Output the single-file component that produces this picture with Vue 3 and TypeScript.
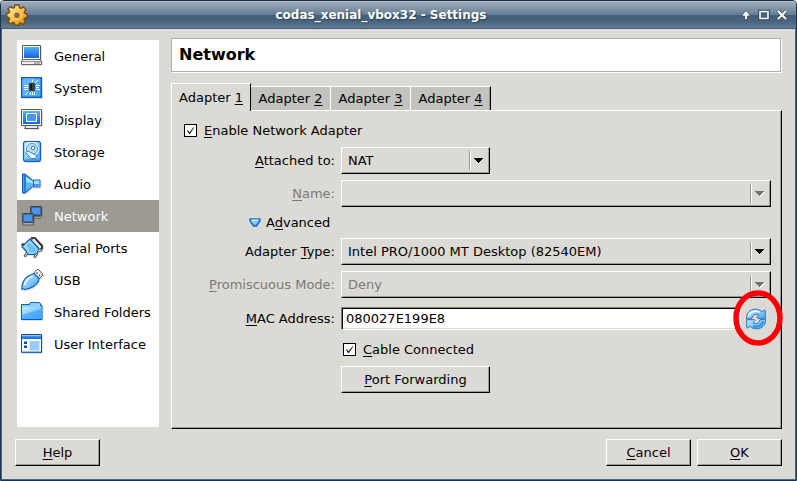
<script setup lang="ts">
import { ref } from 'vue'

interface Page {
  id: string
  label: string
}

const pages: Page[] = [
  { id: 'general', label: 'General' },
  { id: 'system', label: 'System' },
  { id: 'display', label: 'Display' },
  { id: 'storage', label: 'Storage' },
  { id: 'audio', label: 'Audio' },
  { id: 'network', label: 'Network' },
  { id: 'serial', label: 'Serial Ports' },
  { id: 'usb', label: 'USB' },
  { id: 'folders', label: 'Shared Folders' },
  { id: 'interface', label: 'User Interface' },
]

const currentPage = ref('network')
const currentTab = ref(1)
const enabled = ref(true)
const cable = ref(true)
const mac = ref('080027E199E8')

function newMac(): void {
  let tail = ''
  for (let i = 0; i < 6; i++) {
    tail += Math.floor(Math.random() * 16).toString(16).toUpperCase()
  }
  mac.value = '080027' + tail
}
</script>

<template>
  <div class="window">
    <svg class="defs" width="0" height="0" aria-hidden="true">
      <defs>
        <linearGradient id="screen" x1="0" y1="0" x2="0" y2="1">
          <stop offset="0" stop-color="#4fb0ff" />
          <stop offset="1" stop-color="#1663dc" />
        </linearGradient>
        <linearGradient id="sky" x1="0" y1="0" x2="1" y2="1">
          <stop offset="0" stop-color="#c9ecff" />
          <stop offset="1" stop-color="#43a5f8" />
        </linearGradient>
        <linearGradient id="gold" x1="0" y1="0" x2="1" y2="1">
          <stop offset="0" stop-color="#fff3bd" />
          <stop offset="0.5" stop-color="#f9c04a" />
          <stop offset="1" stop-color="#d98209" />
        </linearGradient>
      </defs>
    </svg>

    <header class="titlebar">
      <svg class="gear" viewBox="0 0 22 22" aria-hidden="true">
        <path d="M9 1h4l.7 2.800 1.300.6L17.600 3 20 5.600l-1.700 2.500.5 1.300L21.200 10v3.500l-2.600.7-.6 1.400L19.600 18 17 20.500l-2.500-1.600-1.300.6L12.500 21.200H9l-.7-2.200-1.400-.6L4.500 20 2 17.500l1.600-2.500L3 13.700.8 13V9.500L3 8.900l.6-1.400L2 5 4.500 2.600 7 4.200l1.300-.5z" fill="url(#gold)" stroke="#7b4a12" stroke-width="1.400" stroke-linejoin="round" />
        <circle cx="11" cy="11.300" r="4.300" fill="#f0ae36" stroke="#ffdf86" stroke-width="1" />
        <circle cx="11" cy="11.300" r="1.900" fill="#66727a" stroke="#9a611c" stroke-width="1.300" />
      </svg>
      <h1 class="title">codas_xenial_vbox32 - Settings</h1>
      <div class="controls">
        <button type="button" class="control" aria-label="Shade">
          <svg viewBox="0 0 12 12"><path d="M6 1.500 L10 6 V7 H7.500 V10.500 H4.500 V7 H2 V6 Z" fill="#fff" stroke="#2d4357" stroke-width="0.800" /></svg>
        </button>
        <button type="button" class="control" aria-label="Maximize">
          <svg viewBox="0 0 12 12"><path d="M2 2.500H10V9.500H2Z" fill="none" stroke="#2d4357" stroke-width="3.600" /><path d="M2 2.500H10V9.500H2Z" fill="#46627b" stroke="#fff" stroke-width="1.600" /></svg>
        </button>
        <button type="button" class="control" aria-label="Close">
          <svg viewBox="0 0 12 12"><path d="M2 2L10 10M10 2L2 10" stroke="#2d4357" stroke-width="3.600" /><path d="M2 2L10 10M10 2L2 10" stroke="#fff" stroke-width="2.200" /></svg>
        </button>
      </div>
    </header>

    <main class="content">
      <div class="columns">
        <nav class="sidebar">
          <a
            v-for="page in pages"
            :key="page.id"
            href="#"
            class="page"
            :class="{ current: page.id === currentPage }"
            @click.prevent="currentPage = page.id"
          >
            <svg class="page-icon" viewBox="0 0 22 22" aria-hidden="true">
              <template v-if="page.id === 'general'">
                <path d="M1.500.5h18v14h-18z" fill="#fff" stroke="#555" />
                <path d="M3 2h15v11H3z" fill="url(#screen)" />
                <path d="M2.500 14.500h16l2 1.500v3.500H.5V16z" fill="#eee" stroke="#666" />
                <path d="M1 16.500h19" stroke="#999" />
                <path d="M13 18h6" stroke="#777" />
              </template>
              <template v-else-if="page.id === 'system'">
                <path d="M.75.75h19.500v19.500H.75z" fill="url(#sky)" stroke="#0b5cbb" stroke-width="1.500" />
                <path d="M2 2h17v17H2z" fill="#48aaf5" opacity=".75" />
                <path d="M8 6h6v8H8z" fill="#3b3f46" />
                <path d="M9.500 7h1.500v6H9.500z" fill="#111" />
                <path d="M3 8.500h4M3 10.500h4M3 12.500h4M15 8.500h4M15 10.500h3M15 12.500h4M11.500 2.500v2.500M9.500 15v3M11.500 15v3M13.500 15v3M14 6l3-3M7 15l-3 3" stroke="#fff" stroke-width="1" />
              </template>
              <template v-else-if="page.id === 'display'">
                <path d="M.5.5h20v16H.5z" fill="#fff" stroke="#555" />
                <path d="M2 2h17v13H2z" fill="url(#screen)" />
                <path d="M5.500 4.500h10v8h-10z" fill="#409af5" stroke="#fff" stroke-width="1" />
                <path d="M4.500 16.500h12v1.500l1 1.500h-14l1-1.500z" fill="#eee" stroke="#555" />
              </template>
              <template v-else-if="page.id === 'storage'">
                <path d="M3.500.5h15l1 2v16.500l-1.500 1.500H4L2.500 19V2.500z" fill="url(#sky)" stroke="#0b62c4" stroke-width="1.200" />
                <circle cx="11" cy="8" r="6.300" fill="#b9e0fa" stroke="#fff" stroke-width="1.400" />
                <circle cx="11" cy="8" r="5.600" fill="none" stroke="#2780d1" stroke-width=".8" />
                <circle cx="12" cy="7" r="1.800" fill="#fff" stroke="#2c77bc" />
                <path d="M5 11.500l2-1.500 8.500 4.500v1.500l-1.500 1.500h-4z" fill="#fff" stroke="#176fc9" stroke-width=".9" />
                <path d="M4 19h14" stroke="#2380dc" />
              </template>
              <template v-else-if="page.id === 'audio'">
                <path d="M1.500 1v19h2.500L12.500 13V8L4 1z" fill="#1d7fe0" stroke="#0a58b4" stroke-linejoin="round" />
                <path d="M5 3.500l7 5v4.500L5 18z" fill="#5fb7fa" />
                <path d="M5 3.500l7 5v2L5 9z" fill="#a9dcff" />
                <path d="M2.500 2v17" stroke="#4aa5f2" stroke-width="1" />
                <path d="M12.500 7h6.500v7h-6.500z" fill="#a6dbff" stroke="#1867c4" />
                <path d="M13 11h5.500v2.500H13z" fill="#3e9dee" />
              </template>
              <template v-else-if="page.id === 'network'">
                <path d="M9.500 1.500h11v9h-11z" fill="#c3c3c3" stroke="#444" />
                <path d="M10.500 2.500h9v7h-9z" fill="#4a95ea" stroke="#1c5ba9" stroke-width=".8" />
                <path d="M13 11.500h6v1.500h-6z" fill="#ddd" stroke="#555" stroke-width=".8" />
                <path d="M1.500 8.500h11v9h-11z" fill="#d8d8d8" stroke="#444" />
                <path d="M2.500 9.500h9v7h-9z" fill="#4a95ea" stroke="#1c5ba9" stroke-width=".8" />
                <path d="M2 18h10l.5 1.800h-11z" fill="#eee" stroke="#555" stroke-width=".9" />
              </template>
              <template v-else-if="page.id === 'serial'">
                <path d="M10 1.500l3-1 8.500 9-1.500 3" fill="none" stroke="#333" stroke-width="2.400" />
                <path d="M12.500 2l7.500 8.500" stroke="#f3f3f3" stroke-width="1.200" />
                <path d="M1 9.500L9 2l9 9.500-2.500 6H6.500L5 14z" fill="url(#sky)" stroke="#0b5cbb" stroke-width="1.200" stroke-linejoin="round" />
                <path d="M5 8l3.500-3 8 8-2 3H8.500z" fill="#6bbdf8" stroke="#d9f3ff" stroke-width=".7" />
                <path d="M.8 8.500l2-2M3.500 19.500l2.500-3.500M13 20.500l3-4M17 14.500l4-2" fill="none" stroke="#444" stroke-width="2.400" />
                <path d="M4 19l2-3M13.500 20l2.300-3.200M17 14.300l3.300-1.600" stroke="#eee" stroke-width="1" />
              </template>
              <template v-else-if="page.id === 'usb'">
                <path d="M12 5l4-4.500h1.500L21.500 5v1.500l-4 4z" fill="#f2f2f2" stroke="#555" stroke-linejoin="round" />
                <path d="M15.500 3.500l1 1M18 6l1 1" stroke="#333" stroke-width="1.400" />
                <path d="M10.500 5.500L13 4.500 18 9.500 17.500 12 C15 17 10 19.500 4 20.500L1 19.500 1 17C2 11 6 7 10.500 5.500z" fill="url(#sky)" stroke="#0b5cbb" stroke-width="1.200" stroke-linejoin="round" />
                <path d="M3.500 16C5 11 8 8.500 11.500 7.500" fill="none" stroke="#eefaff" stroke-width="1.600" />
                <path d="M1.500 19l-1 2" stroke="#0b5cbb" />
              </template>
              <template v-else-if="page.id === 'folders'">
                <path d="M.5 18.500V3.500h8v-1L10 1.500H18l1.500 1V4.500h1.500v14z" fill="#8fd0ff" stroke="#075fbe" stroke-linejoin="round" />
                <path d="M1 6h19.500v12.500H1z" fill="url(#sky)" />
                <path d="M1 14l19.500-6v10.500H1z" fill="#35a3fa" opacity=".65" />
                <path d="M.5 18.500h20.500" stroke="#0659b5" />
              </template>
              <template v-else>
                <path d="M.5 1.500h20v18H.5z" fill="#fff" stroke="#1d4e94" />
                <path d="M1 2h19v4H1z" fill="url(#screen)" />
                <path d="M1 2.500h19" stroke="#8fcaff" />
                <path d="M3 8.500h3v2.500H3zM3 12.500h3V15H3z" fill="#124e9f" />
                <path d="M8.500 8h10v9.500h-10z" fill="#9bcaff" />
                <path d="M1 19h19" stroke="#3b7acb" />
              </template>
            </svg>
            <span>{{ page.label }}</span>
          </a>
        </nav>

        <section class="settings">
          <h2 class="heading">Network</h2>

          <div class="tabs" role="tablist">
            <button
              v-for="n in 4"
              :key="n"
              type="button"
              role="tab"
              class="tab"
              :class="{ active: n === currentTab }"
              :aria-selected="n === currentTab"
              @click="currentTab = n"
            >Adapter <u>{{ n }}</u></button>
          </div>

          <form class="pane" @submit.prevent>
            <label class="check">
              <input v-model="enabled" type="checkbox" />
              <span><u>E</u>nable Network Adapter</span>
            </label>

            <div class="fields">
              <label class="name" for="attached"><u>A</u>ttached to:</label>
              <div class="combo short">
                <select id="attached">
                  <option>NAT</option>
                </select>
                <svg class="arrow" viewBox="0 0 20 19"><path d="M.5 0v19" stroke="#9c9a94" /><path d="M1.500 0v19" stroke="#fff" /><path d="M5 7h9v1h-1v1h-1v1h-1v1h-1v1h-1v-1h-1v-1h-1V9H6V8H5z" fill="#000" /></svg>
              </div>

              <label class="name off" for="netname"><u>N</u>ame:</label>
              <div class="combo">
                <select id="netname" disabled></select>
                <svg class="arrow" viewBox="0 0 20 19"><path d="M.5 0v19" stroke="#9c9a94" /><path d="M1.500 0v19" stroke="#fff" /><path d="M6 8h9v1h-1v1h-1v1h-1v1h-1v1h-1v-1H9z" fill="#fff" /><path d="M5 7h9v1h-1v1h-1v1h-1v1h-1v1h-1v-1h-1v-1h-1V9H6V8H5z" fill="#757570" /></svg>
              </div>

              <button type="button" class="advanced">
                <svg viewBox="0 0 12 12" aria-hidden="true"><path d="M1 2H11V3.500L7.500 9H4.500L1 3.500Z" fill="url(#sky)" stroke="#0869d4" stroke-width="1.400" stroke-linejoin="round" /><path d="M2.500 3H9.500" stroke="#e8f7ff" stroke-width="1.200" /></svg>
                <span>A<u>d</u>vanced</span>
              </button>

              <label class="name" for="adapter">Adapter <u>T</u>ype:</label>
              <div class="combo">
                <select id="adapter">
                  <option>Intel PRO/1000 MT Desktop (82540EM)</option>
                </select>
                <svg class="arrow" viewBox="0 0 20 19"><path d="M.5 0v19" stroke="#9c9a94" /><path d="M1.500 0v19" stroke="#fff" /><path d="M5 7h9v1h-1v1h-1v1h-1v1h-1v1h-1v-1h-1v-1h-1V9H6V8H5z" fill="#000" /></svg>
              </div>

              <label class="name off" for="promiscuous"><u>P</u>romiscuous Mode:</label>
              <div class="combo">
                <select id="promiscuous" disabled>
                  <option>Deny</option>
                </select>
                <svg class="arrow" viewBox="0 0 20 19"><path d="M.5 0v19" stroke="#9c9a94" /><path d="M1.500 0v19" stroke="#fff" /><path d="M6 8h9v1h-1v1h-1v1h-1v1h-1v1h-1v-1H9z" fill="#fff" /><path d="M5 7h9v1h-1v1h-1v1h-1v1h-1v1h-1v-1h-1v-1h-1V9H6V8H5z" fill="#757570" /></svg>
              </div>

              <label class="name" for="mac"><u>M</u>AC Address:</label>
              <div class="mac">
                <input id="mac" v-model="mac" type="text" class="text" />
                <button type="button" class="refresh" aria-label="Generate new MAC address" @click="newMac">
                  <svg class="refresh-icon" viewBox="0 0 22 22" aria-hidden="true">
                    <path d="M1.500 11C1 5 5 1.200 10.500 1.200c2.700 0 5 .9 6.500 2.600L19.500 2 20.300 2.500v7.800H12.500L12 9.500l2-2.200C11.500 5.200 7.500 6.500 7 10.300z" fill="url(#sky)" stroke="#2a78b8" stroke-width="1" stroke-linejoin="round" />
                    <path d="M20.500 11c.5 6-3.500 9.800-9 9.800-2.700 0-5-.9-6.500-2.600L2.500 20l-.8-.5v-7.800h7.800l.5.800-2 2.200c2.500 2.100 6.500.8 7-3z" fill="url(#sky)" stroke="#2a78b8" stroke-width="1" stroke-linejoin="round" />
                    <path d="M3.300 8.500C4.500 4 9.500 1.800 14.500 4.300" fill="none" stroke="#eefaff" stroke-width="1.600" />
                    <path d="M8 18.200c4.500 1.500 9-.5 10.300-5" fill="none" stroke="#2e90e0" stroke-width="2" />
                  </svg>
                  <svg class="ring" viewBox="0 0 50 56" aria-hidden="true">
                    <ellipse cx="25" cy="28" rx="22" ry="25" fill="none" stroke="#fb0007" stroke-width="5.500" />
                  </svg>
                </button>
              </div>

              <label class="check cable">
                <input v-model="cable" type="checkbox" />
                <span><u>C</u>able Connected</span>
              </label>

              <button type="button" class="push forward"><span><u>P</u>ort Forwarding</span></button>
            </div>
          </form>
        </section>
      </div>

      <footer class="actions">
        <button type="button" class="push help"><span><u>H</u>elp</span></button>
        <button type="button" class="push"><span><u>C</u>ancel</span></button>
        <button type="button" class="push"><span><u>O</u>K</span></button>
      </footer>
    </main>
  </div>
</template>

<style>
body {
  background: #fff;
}
</style>

<style scoped>
* {
  box-sizing: border-box;
}

.window {
  display: flex;
  flex-direction: column;
  min-height: 100vh;
  border: 1px solid #1f3347;
  border-radius: 4px 4px 0 0;
  background: #dcdad5;
  color: #000;
  font: 13px/17px "DejaVu Sans", sans-serif;
  overflow: hidden;
}

.defs {
  position: absolute;
}

button,
input,
select {
  margin: 0;
  font: inherit;
  color: inherit;
}

button {
  padding: 0;
  border: 0;
  background: none;
}

u {
  text-decoration: underline 1px;
  text-underline-offset: 2px;
  text-decoration-skip-ink: none;
}

.titlebar {
  display: grid;
  grid-template-columns: 22px 1fr 54px;
  align-items: center;
  height: 28px;
  padding: 0 8px 0 5px;
  border-top: 1px solid #b4c0cb;
  border-bottom: 1px solid #3e5f80;
  background: linear-gradient(#9eacba 0%, #647f96 48%, #446079 52%, #49657e 75%, #607c94 100%);
}

.gear {
  width: 22px;
  height: 22px;
}

.title {
  margin: 0;
  color: #fff;
  font-size: 12px;
  line-height: 16px;
  font-weight: bold;
  text-align: center;
  text-shadow: 1px 1px 1px #2d4357;
}

.controls {
  display: flex;
  justify-content: flex-end;
  gap: 6px;
}

.control,
.control svg {
  display: block;
  width: 12px;
  height: 12px;
}

.content {
  display: flex;
  flex: 1;
  flex-direction: column;
  gap: 10px;
  padding: 9px 13px 13px;
  border: solid #46688a;
  border-width: 0 1px 1px;
}

.columns {
  display: flex;
  flex: 1;
  gap: 10px;
}

.sidebar {
  flex: none;
  width: 146px;
  border: 2px solid transparent;
  background: #fff;
  background-clip: padding-box;
}

.page {
  display: flex;
  align-items: center;
  gap: 11px;
  height: 32px;
  padding-left: 4px;
  color: #000;
  text-decoration: none;
  white-space: nowrap;
}

.page.current {
  background: #9c9a93;
  color: #fff;
}

.page-icon {
  flex: none;
  width: 22px;
  height: 22px;
  filter: drop-shadow(1px 1px 0 rgba(0, 0, 0, 0.12));
}

.settings {
  display: flex;
  flex: 1;
  flex-direction: column;
  min-width: 0;
}

.heading {
  margin: 0 1px 11px 0;
  padding: 6px 7px;
  border: 1px solid #adaeac;
  box-shadow: 1px 1px 0 #fff;
  background: #fff;
  font-size: 16px;
  line-height: 20px;
}

.tabs {
  display: flex;
  align-items: flex-end;
  height: 27px;
}

.tab {
  height: 24px;
  width: 80px;
  border: solid #fff;
  border-width: 1px 0 0 1px;
  background: #c3c2bd;
}

.tab:last-child {
  width: 81px;
  border-right: 1px solid #000;
  box-shadow: inset -1px 0 0 #8f8e89;
}

.tab.active {
  position: relative;
  height: 28px;
  margin-right: -1px;
  margin-bottom: -1px;
  padding-bottom: 1px;
  border-right: 1px solid #000;
  background: #dcdad5;
}

.tab.active + .tab {
  border-left-color: #c3c2bd;
}

.pane {
  flex: 1;
  padding: 9px 10px 9px 12px;
  border: 1px solid;
  border-color: #fff #000 #000 #fff;
  box-shadow: inset -1px -1px 0 #9c9a94;
}

.check {
  display: flex;
  align-items: center;
  gap: 7px;
  width: fit-content;
  height: 21px;
}

.check input {
  appearance: none;
  width: 13px;
  height: 13px;
  border: 1px solid #000;
  background: #fff;
}

.check input:checked {
  display: grid;
  place-items: center;
}

.check input:checked::before {
  content: "";
  width: 9px;
  height: 9px;
  background: #222;
  clip-path: polygon(10% 52%, 22% 46%, 38% 70%, 84% 14%, 92% 18%, 44% 90%, 34% 90%);
}

.fields {
  display: grid;
  grid-template-columns: 151px 1fr;
  gap: 6px;
  align-items: center;
  margin-top: 6px;
}

.name {
  text-align: right;
  white-space: nowrap;
}

.off {
  color: #7b7a76;
}

.combo {
  display: grid;
  align-items: center;
}

.combo > * {
  grid-area: 1 / 1;
}

.short,
.forward {
  width: 149px;
}

.combo select {
  appearance: none;
  width: 100%;
  height: 27px;
  padding: 0 24px 0 6px;
  border: 1px solid;
  border-color: #fff #000 #000 #fff;
  border-radius: 0;
  box-shadow: inset -1px -1px 0 #9c9a94;
  background: #dcdad5;
}

.combo select:disabled {
  color: #7b7a76;
  opacity: 1;
}

.arrow {
  justify-self: end;
  width: 20px;
  height: 19px;
  margin-right: 1px;
  pointer-events: none;
}

.advanced {
  display: flex;
  grid-column: 1 / -1;
  align-items: center;
  gap: 5px;
  width: fit-content;
  height: 19px;
  padding-left: 65px;
}

.advanced svg {
  width: 12px;
  height: 12px;
}

.mac {
  display: flex;
  align-items: center;
  height: 29px;
}

.text {
  flex: 1;
  min-width: 0;
  height: 23px;
  padding: 0 4px;
  border: 1px solid;
  border-color: #84837f #fff #fff #84837f;
  box-shadow: inset 1px 1px 0 #000, inset -1px -1px 0 #dcdad5;
  background: #fff;
}

.refresh {
  position: relative;
  display: grid;
  place-items: center;
  flex: none;
  width: 30px;
  height: 29px;
}

.refresh-icon {
  width: 22px;
  height: 22px;
}

.ring {
  position: absolute;
  top: -14px;
  left: -8px;
  width: 50px;
  height: 56px;
  pointer-events: none;
}

.cable {
  grid-column: 2;
  margin-left: 2px;
}

.push {
  width: 85px;
  height: 27px;
  border: 1px solid;
  border-color: #fff #000 #000 #fff;
  box-shadow: inset -1px -1px 0 #9c9a94;
}

.forward {
  grid-column: 2;
  width: 149px;
}

.actions {
  display: flex;
  gap: 6px;
}

.help {
  margin-right: auto;
}
</style>
